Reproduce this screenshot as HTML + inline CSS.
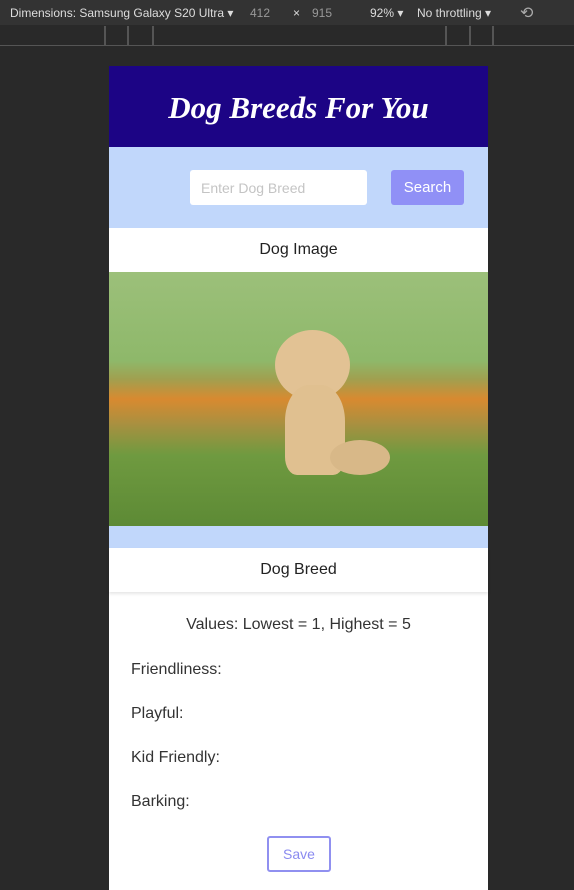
<!DOCTYPE html><html><head><style>
body{margin:0;width:574px;height:890px;background:#292929;font-family:"Liberation Sans",sans-serif;position:relative;overflow:hidden}
.a{position:absolute}
.t{color:#ddd;font-size:12px}
</style></head><body>
<div class="a" style="left:0;top:0;width:574px;height:25px;background:#333"></div>
<div class="a t" style="left:10px;top:6px">Dimensions: Samsung Galaxy S20 Ultra ▾</div>
<div class="a t" style="left:250px;top:6px;color:#999">412</div>
<div class="a t" style="left:293px;top:6px">×</div>
<div class="a t" style="left:312px;top:6px;color:#999">915</div>
<div class="a t" style="left:370px;top:6px">92% ▾</div>
<div class="a t" style="left:417px;top:6px">No throttling ▾</div>
<div class="a t" style="left:520px;top:3px;font-size:16px;color:#aaa">⟲</div>
<div class="a" style="left:0;top:45px;width:574px;height:1px;background:#555"></div>
<div class="a" style="left:104px;top:26px;width:2px;height:19px;background:#555"></div>
<div class="a" style="left:127px;top:26px;width:2px;height:19px;background:#555"></div>
<div class="a" style="left:152px;top:26px;width:2px;height:19px;background:#555"></div>
<div class="a" style="left:445px;top:26px;width:2px;height:19px;background:#555"></div>
<div class="a" style="left:469px;top:26px;width:2px;height:19px;background:#555"></div>
<div class="a" style="left:492px;top:26px;width:2px;height:19px;background:#555"></div>

<div class="a" style="left:109px;top:66px;width:379px;height:824px;background:#fff"></div>
<div class="a" style="left:109px;top:66px;width:379px;height:81px;background:#1c0485;color:#fff;font:italic bold 31px 'Liberation Serif',serif;text-align:center;line-height:84px">Dog Breeds For You</div>
<div class="a" style="left:109px;top:147px;width:379px;height:81px;background:#c1d7fb"></div>
<div class="a" style="left:190px;top:170px;width:177px;height:35px;background:#fff;border-radius:3px;color:#c4c4c4;font-size:14px;line-height:36px;text-indent:11px">Enter Dog Breed</div>
<div class="a" style="left:391px;top:170px;width:73px;height:35px;background:#9090f6;border-radius:3px;color:#fff;font-size:15px;line-height:35px;text-align:center">Search</div>
<div class="a" style="left:109px;top:228px;width:379px;height:44px;color:#222;font-size:16px;line-height:44px;text-align:center">Dog Image</div>
<div class="a" style="left:109px;top:272px;width:379px;height:254px;background:linear-gradient(#9cc07a 0%,#8eb86a 35%,#a0a050 42%,#d88a30 50%,#a89040 60%,#6f9a40 72%,#5d8a35 100%)"></div>
<div class="a" style="left:275px;top:330px;width:75px;height:70px;background:#e2c294;border-radius:50%"></div>
<div class="a" style="left:285px;top:385px;width:60px;height:90px;background:#e0c090;border-radius:40% 40% 20% 20%"></div>
<div class="a" style="left:330px;top:440px;width:60px;height:35px;background:#d8b888;border-radius:50%"></div>
<div class="a" style="left:109px;top:526px;width:379px;height:22px;background:#c1d7fb"></div>
<div class="a" style="left:109px;top:548px;width:379px;height:44px;color:#222;font-size:16px;line-height:44px;text-align:center;box-shadow:0 2px 3px rgba(0,0,0,.1)">Dog Breed</div>
<div class="a" style="left:109px;top:616px;width:379px;color:#333;font-size:16px;text-align:center">Values: Lowest = 1, Highest = 5</div>
<div class="a" style="left:131px;top:661px;color:#333;font-size:16px">Friendliness:</div>
<div class="a" style="left:131px;top:705px;color:#333;font-size:16px">Playful:</div>
<div class="a" style="left:131px;top:749px;color:#333;font-size:16px">Kid Friendly:</div>
<div class="a" style="left:131px;top:793px;color:#333;font-size:16px">Barking:</div>
<div class="a" style="left:267px;top:836px;width:60px;height:32px;border:2px solid #9090f0;border-radius:3px;color:#8a8af0;font-size:14px;line-height:32px;text-align:center">Save</div>
</body></html>
